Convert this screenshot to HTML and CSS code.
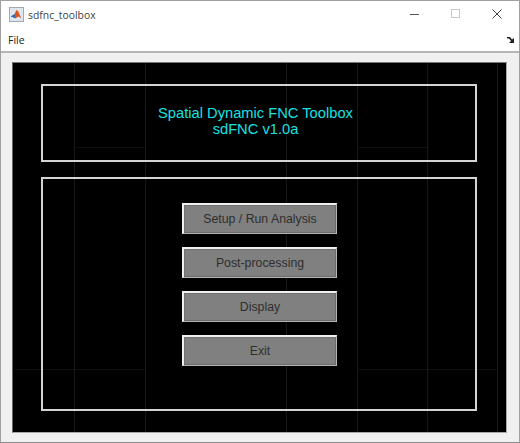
FILE: index.html
```html
<!DOCTYPE html>
<html lang="en">
<head>
    <meta charset="UTF-8">
    <title>sdfnc_toolbox</title>
    <link rel="stylesheet" href="styles.css">
</head>
<body>
    <div class="window">
        <header class="title-bar">
            <svg class="app-icon" width="15" height="15" viewBox="0 0 16 16">
                <rect x="0.5" y="0.5" width="15" height="15" fill="#dfe6ee" stroke="#9aa5b1"/>
                <path d="M2 10 L6 7.5 L8 3 L10 5 L13 12 L10 10 L7 12 Z" fill="#d9541e"/>
                <path d="M2 10 L6 7.5 L7 12 Z" fill="#2a6fb5"/>
            </svg>
            <span class="title-text">sdfnc_toolbox</span>
            <div class="window-controls">
                <svg width="10" height="10" viewBox="0 0 10 10"><path d="M0 5.5 H9" stroke="#555" stroke-width="1"/></svg>
                <svg width="10" height="10" viewBox="0 0 10 10"><rect x="0.5" y="0.5" width="8" height="8" fill="none" stroke="#c8c8c8"/></svg>
                <svg width="10" height="10" viewBox="0 0 10 10"><path d="M0.5 0.5 L9.5 9.5 M9.5 0.5 L0.5 9.5" stroke="#444" stroke-width="1"/></svg>
            </div>
        </header>
        <nav class="menu-bar">
            <span class="menu-item">File</span>
            <svg class="dock-arrow" width="8" height="8" viewBox="0 0 8 8"><path d="M0 1 H3 L5 3.5 L7 2 V7 H2 L4 5 L2 2.5 H0 Z" fill="#222"/></svg>
        </nav>
        <main class="content">
            <div class="figure">
                <section class="panel title-panel">
                    <h1>Spatial Dynamic FNC Toolbox</h1>
                    <h1>sdFNC v1.0a</h1>
                </section>
                <section class="panel button-panel">
                    <button class="tool-btn">Setup / Run Analysis</button>
                    <button class="tool-btn">Post-processing</button>
                    <button class="tool-btn">Display</button>
                    <button class="tool-btn">Exit</button>
                </section>
            </div>
        </main>
    </div>
</body>
</html>
```

FILE: styles.css
```css
:root {
    --grid-line: #181818;
    --grid-line-faint: #0f0f0f;
}

* {
    box-sizing: border-box;
    margin: 0;
    padding: 0;
}

body {
    width: 520px;
    height: 443px;
    overflow: hidden;
    background-color: #fff;
    font-family: "Liberation Sans", Arial, sans-serif;
}

.window {
    display: flex;
    flex-direction: column;
    height: 443px;
    border: 1px solid #a0a0a0;
    border-bottom-color: #8a8a8a;
    background-color: #fff;
}

.title-bar {
    display: flex;
    align-items: center;
    height: 29px;
    padding: 0 17px 3px 8px;
}

.app-icon {
    margin-right: 4px;
}

.title-text {
    margin-top: 1px;
    font-family: "Open Sans", sans-serif;
    font-size: 10.4px;
    color: #444;
}

.window-controls {
    display: flex;
    gap: 31px;
    margin-left: auto;
}

.menu-bar {
    display: flex;
    align-items: center;
    justify-content: space-between;
    height: 23px;
    padding: 0 4px 2px 7px;
    border-bottom: 2px solid #b4b4b4;
}

.menu-item {
    font-family: "Open Sans", sans-serif;
    font-size: 10.5px;
    font-weight: 500;
    color: #222;
}

.content {
    flex: 1;
    padding: 9px 12px 9px 11px;
    background-color: #f0f0f0;
}

/* faint grid left behind the panels */
.figure {
    display: flex;
    flex-direction: column;
    gap: 15px;
    height: 100%;
    padding: 21px 29px 0 28px;
    background-color: #000;
    border: 1px solid #a8a8a8;
    border-top-color: #777;
    border-left-color: #666;
    background-image:
        linear-gradient(var(--grid-line), var(--grid-line)),
        linear-gradient(var(--grid-line), var(--grid-line)),
        linear-gradient(var(--grid-line), var(--grid-line)),
        linear-gradient(var(--grid-line), var(--grid-line)),
        linear-gradient(var(--grid-line), var(--grid-line)),
        linear-gradient(var(--grid-line), var(--grid-line)),
        linear-gradient(var(--grid-line-faint), var(--grid-line-faint)),
        linear-gradient(var(--grid-line-faint), var(--grid-line-faint)),
        linear-gradient(var(--grid-line-faint), var(--grid-line-faint)),
        linear-gradient(var(--grid-line-faint), var(--grid-line-faint));
    background-repeat: no-repeat;
    background-size:
        1px 100%, 1px 100%, 1px 100%, 1px 100%, 1px 100%, 1px 100%,
        132px 1px, 141px 1px, 71px 1px, 71px 1px;
    background-position:
        61px 0, 132px 0, 273px 0, 344px 0, 414px 0, 484px 0,
        1px 306px, 344px 306px, 61px 84px, 344px 84px;
}

.panel {
    border: 2px solid #d4d4d4;
}

.title-panel {
    display: flex;
    flex-direction: column;
    align-items: center;
    height: 78px;
    padding: 19px 7px 0 0;
}

.title-panel h1 {
    font-size: 14.7px;
    font-weight: normal;
    line-height: 16px;
    color: #1ae0e0;
}

.button-panel {
    display: flex;
    flex-direction: column;
    align-items: center;
    gap: 13.3px;
    height: 234px;
    padding: 23.5px 0 0 1px;
}

.tool-btn {
    width: 155px;
    height: 31px;
    font-family: "Liberation Sans", Arial, sans-serif;
    font-size: 12.3px;
    color: #2e2e2e;
    background-color: #808080;
    border: 2px solid #b4b4b4;
    border-top-color: #f0f0f0;
    border-left-color: #f0f0f0;
    border-right-width: 1px;
    border-bottom-width: 1px;
    box-shadow: inset -1px -1px 0 #6c6c6c, inset 1px 1px 0 #707070;
}
```
